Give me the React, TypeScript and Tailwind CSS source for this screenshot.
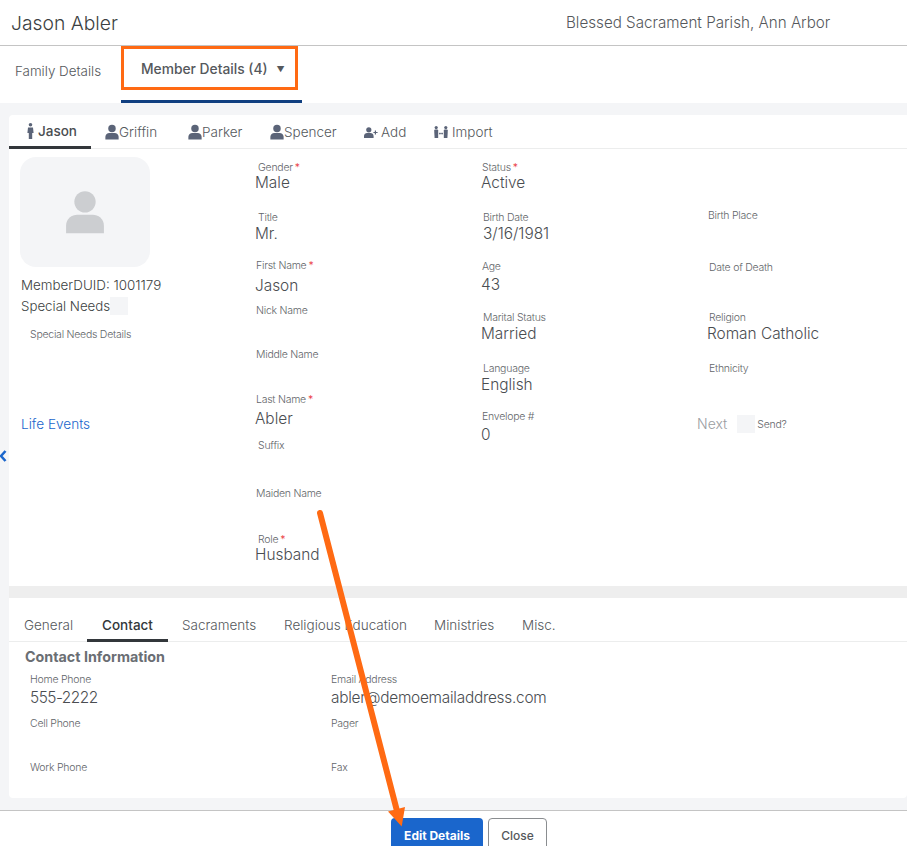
const FONT = "font-['Inter','Noto_Sans',sans-serif]";

function PersonIcon({ className }: { className?: string }) {
  return (
    <svg viewBox="0 0 15 16" className={className} fill="currentColor">
      <circle cx="7.5" cy="4.2" r="4" />
      <path d="M0.4 16 V13.2 C0.4 10.4 2.6 9 4.6 9 H10.4 C12.4 9 14.6 10.4 14.6 13.2 V16 Z" />
    </svg>
  );
}

function StandingIcon() {
  return (
    <svg viewBox="0 0 7 16" className="w-[7px] h-4 mr-[4px] text-[#5b6478]" fill="currentColor">
      <circle cx="3.5" cy="1.8" r="1.8" />
      <path d="M1 4.4 H6 L6.6 10 H5.2 V16 H1.8 V10 H0.4 Z" />
    </svg>
  );
}

function AddIcon() {
  return (
    <svg viewBox="0 0 14 11" className="w-[14px] h-[11px] text-[#5b6478]" fill="currentColor">
      <circle cx="4.8" cy="2.8" r="2.6" />
      <path d="M0 11 V9 C0 7 1.6 6 3 6 H6.6 C8 6 9.6 7 9.6 9 V11 Z" />
      <path d="M10.8 3.4 H12 V5 H13.6 V6 H12 V7.6 H10.8 V6 H9.4 V5 H10.8 Z" />
    </svg>
  );
}

function ImportIcon() {
  return (
    <svg viewBox="0 0 14 12" className="w-[14px] h-[12px] text-[#5b6478]" fill="currentColor">
      <circle cx="2.2" cy="1.6" r="1.6" />
      <circle cx="11.8" cy="1.6" r="1.6" />
      <path d="M0.2 4.6 Q0.2 3.6 1.2 3.6 H3.2 Q4.2 3.6 4.2 4.6 V12 H0.6 Z" />
      <path d="M9.8 4.6 Q9.8 3.6 10.8 3.6 H12.8 Q13.8 3.6 13.8 4.6 L13.4 12 H9.8 Z" />
      <path d="M4.8 7.6 L6.2 6.2 V7.2 H7.8 V6.2 L9.2 7.6 L7.8 9 V8 H6.2 V9 Z" />
    </svg>
  );
}

function Label({ text, required, className }: { text: string; required?: boolean; className?: string }) {
  return (
    <div className={`text-[10.5px] leading-[16px] -mb-[2px] font-light text-[#63666a] tracking-[-0.25px] whitespace-nowrap ${className ?? ""}`}>
      {text}
      {required && <span className="text-[#e8212b] ml-[2px]">*</span>}
    </div>
  );
}

function Value({ text, className }: { text: string; className?: string }) {
  return <div className={`text-[15.4px] leading-5 font-light text-[#4a4d51] whitespace-nowrap ${className ?? ""}`}>{text}</div>;
}

const col1 = [
  { label: "Gender", req: true, h: "h-[50px]", lx: "ml-[3px]", value: "Male", vy: "-mt-[3px]" },
  { label: "Title", h: "h-[48px]", lx: "ml-[3px]", value: "Mr.", vy: "mt-0" },
  { label: "First Name", req: true, h: "h-[45px]", lx: "ml-px", value: "Jason", vy: "mt-[4px]" },
  { label: "Nick Name", h: "h-[44px]", lx: "ml-px" },
  { label: "Middle Name", h: "h-[45px]", lx: "ml-px" },
  { label: "Last Name", req: true, h: "h-[46px]", lx: "ml-px", value: "Abler", vy: "mt-[3px]" },
  { label: "Suffix", h: "h-[48px]", lx: "ml-[3px]" },
  { label: "Maiden Name", h: "h-[46px]", lx: "ml-px" },
  { label: "Role", req: true, h: "h-[40px]", lx: "ml-[3px]", value: "Husband", vy: "-mt-[3px]" },
];

const col2 = [
  { label: "Status", req: true, h: "h-[50px]", lx: "ml-px", value: "Active", vy: "-mt-[3px]" },
  { label: "Birth Date", h: "h-[49px]", lx: "ml-[2px]", value: "3/16/1981", vy: "mt-0", vx: "ml-[2px]" },
  { label: "Age", h: "h-[51px]", lx: "ml-px", value: "43", vy: "mt-[2px]" },
  { label: "Marital Status", h: "h-[51px]", lx: "ml-[2px]", value: "Married", vy: "mt-0" },
  { label: "Language", h: "h-[48px]", lx: "ml-[2px]", value: "English", vy: "mt-0" },
  { label: "Envelope #", h: "h-[40px]", lx: "ml-px", value: "0", vy: "mt-[2px]" },
];

const col3 = [
  { label: "Birth Place", h: "h-[52px]", lx: "ml-px" },
  { label: "Date of Death", h: "h-[50px]", lx: "ml-[2px]" },
  { label: "Religion", h: "h-[51px]", lx: "ml-[2px]", value: "Roman Catholic", vy: "mt-0" },
  { label: "Ethnicity", h: "h-[47px]", lx: "ml-[2px]" },
];

type FieldDef = { label: string; req?: boolean; h: string; lx: string; value?: string; vy?: string; vx?: string };

function Field({ f }: { f: FieldDef }) {
  return (
    <div className={f.h}>
      <Label text={f.label} required={f.req} className={f.lx} />
      {f.value && <Value text={f.value} className={`${f.vy ?? ""} ${f.vx ?? ""}`} />}
    </div>
  );
}

const memberTabs = [
  { name: "Griffin", w: "w-[83px]" },
  { name: "Parker", w: "w-[82px]" },
  { name: "Spencer", w: "w-[94px]" },
];

const lowerTabs = [
  { name: "General", cls: "pl-[15px] w-[78px] pb-[4px]" },
  { name: "Contact", cls: "w-[81px] justify-center pb-px font-medium text-[#33373b] border-b-[3px] border-[#33373b]" },
  { name: "Sacraments", cls: "pl-[14px] w-[102px] pb-[4px]" },
  { name: "Religious Education", cls: "pl-[14px] w-[150px] pb-[4px]" },
  { name: "Ministries", cls: "pl-[14px] w-[88px] pb-[4px]" },
  { name: "Misc.", cls: "pl-[14px] w-[80px] pb-[4px]" },
];

function Contact({ label, value, valueCls }: { label: string; value?: string; valueCls?: string }) {
  return (
    <div className="h-[44px]">
      <Label text={label} />
      {value && <Value text={value} className={`mt-[2px] ${valueCls ?? ""}`} />}
    </div>
  );
}

export default function App() {
  return (
    <div className={`relative w-[907px] h-[846px] overflow-hidden bg-white flex flex-col ${FONT}`}>
      {/* Title bar */}
      <div className="h-[46px] shrink-0 flex items-center border-b border-[#c4c4c4] pl-[11px] pt-[2px]">
        <div className="w-[555px] text-[19.3px] font-light text-[#3c3f42]">Jason Abler</div>
        <div className="text-[15.2px] font-light text-[#55585c] whitespace-nowrap">Blessed Sacrament Parish, Ann Arbor</div>
      </div>

      {/* Family / member tabs */}
      <div className="h-[57px] shrink-0 flex items-stretch">
        <div className="w-[121px] pl-[15px] pt-[15px] text-[13.4px] leading-5 font-light text-[#55585c]">Family Details</div>
        <div className="w-[181px] border-b-[3px] border-[#103f80] pl-[20px] pt-[13px] text-[13.8px] leading-5 font-medium text-[#55585c] flex items-start whitespace-nowrap">
          Member Details (4)
          <span className="ml-[9px] text-[8px] leading-5 text-[#55585c]">▼</span>
        </div>
      </div>

      <div className="flex-1 flex bg-[#f4f5f7] pt-[12px] min-h-0">
        {/* Gutter with collapse chevron */}
        <div className="w-[9px] shrink-0 pt-[335px]">
          <svg viewBox="0 0 8 12" className="w-[8px] h-[12px] text-[#1a66cc]" fill="none" stroke="currentColor" strokeWidth="2.6">
            <path d="M5.5 1 L1 6 L5.5 11" />
          </svg>
        </div>

        <div className="flex-1 flex flex-col min-w-0">
          {/* Member card */}
          <div className="h-[471px] shrink-0 bg-white rounded-tl-[4px]">
            <div className="h-[34px] flex items-stretch border-b border-[#eceded] text-[13.5px] font-light text-[#55585c]">
              <div className="w-[82px] flex items-center pl-[18px] pt-px border-b-[3px] border-[#33373b] h-[34px] font-medium text-[#4a4d51]">
                <StandingIcon />
                Jason
              </div>
              <div className="flex pl-[14px]">
                {memberTabs.map((t) => (
                  <div key={t.name} className={`flex items-center pt-px ${t.w}`}>
                    <PersonIcon className="w-[14px] h-4 text-[#5b6478]" />
                    {t.name}
                  </div>
                ))}
              </div>
              <div className="flex items-center w-[70px] pt-px">
                <AddIcon />
                <span className="ml-[3px]">Add</span>
              </div>
              <div className="flex items-center pt-px">
                <ImportIcon />
                <span className="ml-[4px]">Import</span>
              </div>
            </div>

            <div className="flex">
              {/* Photo column */}
              <div className="w-[246px] shrink-0 pl-[11px] pt-[8px]">
                <div className="w-[130px] h-[110px] rounded-[16px] bg-[#f4f5f7] flex items-center justify-center">
                  <PersonIcon className="w-[40px] h-[46px] text-[#ccced1]" />
                </div>
                <div className="mt-[8px] pl-px text-[13.4px] leading-5 font-light text-[#3c3f42] whitespace-nowrap">MemberDUID: 1001179</div>
                <div className="mt-px pl-px flex items-center text-[13.3px] leading-5 font-light text-[#3c3f42]">
                  Special Needs
                  <span className="w-[18px] h-[18px] bg-[#f4f5f7]" />
                </div>
                <Label text="Special Needs Details" className="mt-[11px] ml-[10px]" />
                <div className="mt-[73px] pl-px text-[13.6px] leading-5 font-light text-[#1a66cc]">Life Events</div>
              </div>

              {/* Field columns */}
              <div className="w-[226px] shrink-0 pt-[11px]">
                {col1.map((f) => (
                  <Field key={f.label} f={f} />
                ))}
              </div>
              <div className="w-[226px] shrink-0 pt-[11px]">
                {col2.map((f) => (
                  <Field key={f.label} f={f} />
                ))}
              </div>
              <div className="flex-1 pt-[59px]">
                <div>
                  {col3.map((f) => (
                    <Field key={f.label} f={f} />
                  ))}
                </div>
                <div className="flex items-center -ml-[10px] mt-[6px]">
                  <span className="text-[14px] leading-5 font-light text-[#9a9da1]">Next</span>
                  <span className="ml-[10px] w-[18px] h-[18px] bg-[#f4f5f7]" />
                  <Label text="Send?" className="ml-[2px]" />
                </div>
              </div>
            </div>
          </div>

          <div className="h-[12px] shrink-0 bg-[#eeeeee]" />

          {/* Detail card */}
          <div className="h-[200px] shrink-0 bg-white rounded-b-[4px]">
            <div className="pt-[15px] h-[44px] flex items-stretch border-b border-[#eceded] text-[13.5px] font-light text-[#55585c]">
              {lowerTabs.map((t) => (
                <div key={t.name} className={`flex items-center h-[29px] whitespace-nowrap ${t.cls}`}>
                  {t.name}
                </div>
              ))}
            </div>
            <div className="pl-[16px] pt-[5px] text-[14.3px] leading-5 font-bold text-[#6a6e73]">Contact Information</div>
            <div className="flex pl-[21px] pt-[5px]">
              <div className="w-[301px]">
                <Contact label="Home Phone" value="555-2222" valueCls="tracking-[-0.5px]" />
                <Contact label="Cell Phone" />
                <Contact label="Work Phone" />
              </div>
              <div>
                <Contact label="Email Address" value="abler@demoemailaddress.com" valueCls="tracking-[-0.25px]" />
                <Contact label="Pager" />
                <Contact label="Fax" />
              </div>
            </div>
          </div>
          <div className="flex-1" />
        </div>
      </div>

      {/* Footer */}
      <div className="h-[36px] shrink-0 bg-white border-t border-[#c4c4c4] flex pt-[7px] pl-[391px] gap-[5px]">
        <div className="w-[92px] h-[40px] rounded-t-[4px] bg-[#1a66cc] text-white text-[12px] font-bold flex items-start justify-center pt-[9px]">Edit Details</div>
        <div className="w-[59px] h-[40px] rounded-t-[4px] border border-[#8a8d90] text-[#55585c] text-[12px] font-medium flex items-start justify-center pt-[8px]">Close</div>
      </div>

      {/* Annotation overlays */}
      <div className="absolute left-[121px] top-[46px] w-[177px] h-[44px] border-[3px] border-[#ff6a13]" />
      <svg className="absolute left-0 top-0 pointer-events-none" width="907" height="846" viewBox="0 0 907 846">
        <path d="M320 513 L397 811" stroke="#ff6a13" strokeWidth="6" strokeLinecap="round" fill="none" />
        <path d="M388 811.6 L405 807 L401.7 826.6 Z" fill="#ff6a13" />
      </svg>
    </div>
  );
}
